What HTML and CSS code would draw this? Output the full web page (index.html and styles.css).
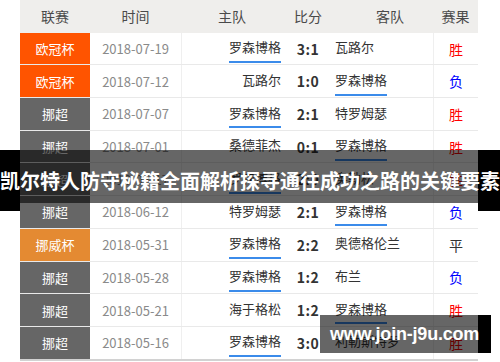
FILE: index.html
```html
<!DOCTYPE html>
<html lang="zh">
<head>
<meta charset="utf-8">
<link rel="stylesheet" href="styles.css">
</head>
<body>
<div class="page">
  <div class="table">
    <div class="row head">
      <div class="c">联赛</div><div class="c">时间</div><div class="c">主队</div><div class="c">比分</div><div class="c guest-h">客队</div><div class="c">赛果</div>
    </div>
    <div class="row">
      <div class="league ucl">欧冠杯</div><div class="date">2018-07-19</div>
      <div class="home"><span class="team u">罗森博格</span></div><div class="score">3:1</div>
      <div class="guest"><span class="team">瓦路尔</span></div><div class="res win">胜</div>
    </div>
    <div class="row">
      <div class="league ucl">欧冠杯</div><div class="date">2018-07-12</div>
      <div class="home"><span class="team">瓦路尔</span></div><div class="score">1:0</div>
      <div class="guest"><span class="team u">罗森博格</span></div><div class="res lose">负</div>
    </div>
    <div class="row">
      <div class="league nor">挪超</div><div class="date">2018-07-07</div>
      <div class="home"><span class="team u">罗森博格</span></div><div class="score">2:1</div>
      <div class="guest"><span class="team">特罗姆瑟</span></div><div class="res win">胜</div>
    </div>
    <div class="row">
      <div class="league nor">挪超</div><div class="date">2018-07-01</div>
      <div class="home"><span class="team">桑德菲杰</span></div><div class="score">0:1</div>
      <div class="guest"><span class="team u">罗森博格</span></div><div class="res win">胜</div>
    </div>
    <div class="row">
      <div class="league nor">挪超</div><div class="date">2018-06-17</div>
      <div class="home"><span class="team u">罗森博格</span></div><div class="score">2:0</div>
      <div class="guest"><span class="team">奥勒松</span></div><div class="res win">胜</div>
    </div>
    <div class="row">
      <div class="league nor">挪超</div><div class="date">2018-06-12</div>
      <div class="home"><span class="team">特罗姆瑟</span></div><div class="score">2:1</div>
      <div class="guest"><span class="team u">罗森博格</span></div><div class="res lose">负</div>
    </div>
    <div class="row">
      <div class="league nwc">挪威杯</div><div class="date">2018-05-31</div>
      <div class="home"><span class="team u">罗森博格</span></div><div class="score">2:2</div>
      <div class="guest"><span class="team">奥德格伦兰</span></div><div class="res draw">平</div>
    </div>
    <div class="row">
      <div class="league nor">挪超</div><div class="date">2018-05-28</div>
      <div class="home"><span class="team u">罗森博格</span></div><div class="score">1:2</div>
      <div class="guest"><span class="team">布兰</span></div><div class="res lose">负</div>
    </div>
    <div class="row">
      <div class="league nor">挪超</div><div class="date">2018-05-21</div>
      <div class="home"><span class="team">海于格松</span></div><div class="score">1:2</div>
      <div class="guest"><span class="team u">罗森博格</span></div><div class="res win">胜</div>
    </div>
    <div class="row last">
      <div class="league nor">挪超</div><div class="date">2018-05-16</div>
      <div class="home"><span class="team u">罗森博格</span></div><div class="score">3:0</div>
      <div class="guest"><span class="team">利勒斯特罗</span></div><div class="res win">胜</div>
    </div>
  </div>

  <div class="band">
    <div class="band-edge band-left"></div>
    <div class="band-mid"></div>
    <div class="band-edge band-right"></div>
    <div class="band-title">凯尔特人防守秘籍全面解析探寻通往成功之路的关键要素</div>
  </div>

  <div class="mark">
    <div class="mark-mid"></div>
    <div class="mark-edge"></div>
    <div class="mark-text">www.join-j9u.com</div>
  </div>
</div>
</body>
</html>
```

FILE: styles.css
```css
html, body {
  margin: 0;
  padding: 0;
  background: #fff;
  overflow: hidden;
}

.page {
  position: relative;
  width: 500px;
  height: 362px;
  overflow: hidden;
  font-family: "Noto Sans CJK SC", "Noto Sans", sans-serif;
}

.table {
  margin-left: 20px;
  width: 458px;
}

.row {
  display: grid;
  grid-template-columns: 70px 91px 102px 50px 100px 45px;
  height: 32.7px;
  box-sizing: border-box;
  border-bottom: 1px solid #e9e9e9;
  font-size: 13px;
  color: #333;
}

.row.last {
  border-bottom: 2px solid #d2d2d2;
  height: 33.7px;
}

.head {
  background: #efeeec;
  border-bottom: none;
  font-size: 14px;
  color: #4a4a4a;
}

.c {
  display: flex;
  align-items: center;
  justify-content: center;
  padding-bottom: 1px;
}

.guest-h {
  padding-left: 14px;
}

.league {
  display: flex;
  align-items: center;
  justify-content: center;
  color: #fff;
}

.ucl { background: #ff5400; }
.nor { background: #666666; }
.nwc { background: #e48a32; }

.date {
  display: flex;
  align-items: center;
  justify-content: center;
  color: #8a8a8a;
  font-size: 13px;
}

.home {
  display: flex;
  justify-content: flex-end;
  padding-right: 2px;
  border-left: 1px solid #efefef;
}

.guest {
  display: flex;
  justify-content: flex-start;
  padding-left: 2px;
}

.team {
  display: flex;
  align-items: center;
  border-bottom: 2px solid transparent;
  margin-bottom: 1.5px;
}

.team.u {
  border-bottom-color: #3b8bea;
}

.score {
  display: flex;
  align-items: center;
  justify-content: center;
  font-weight: bold;
  font-size: 14px;
  letter-spacing: 0.5px;
  color: #333;
}

.res {
  display: flex;
  align-items: center;
  justify-content: center;
  border-left: 1px solid #efefef;
  font-size: 14px;
}

.win { color: #ff0000; }
.lose { color: #0000ff; }
.draw { color: #333; }

.band {
  position: absolute;
  left: 0;
  top: 150px;
  width: 500px;
  height: 61px;
  display: grid;
  grid-template-columns: 20px 1fr 22px;
  grid-template-rows: 53px 8px;
}

.band-edge {
  background: #000;
  grid-row: 1 / 3;
}

.band-left { grid-column: 1; }
.band-right { grid-column: 3; }

.band-mid {
  grid-column: 2;
  grid-row: 1;
  background: rgba(0, 0, 0, 0.6);
}

.band-title {
  grid-column: 1 / 4;
  grid-row: 1 / 3;
  align-self: center;
  justify-self: center;
  white-space: nowrap;
  color: #fff;
  font-weight: bold;
  font-size: 20px;
  line-height: 24px;
  margin-top: 1px;
}

.mark {
  position: absolute;
  left: 320px;
  top: 315px;
  width: 171px;
  height: 38px;
  display: grid;
  grid-template-columns: 158px 13px;
}

.mark-mid {
  grid-column: 1;
  grid-row: 1;
  background: rgba(0, 0, 0, 0.6);
}

.mark-edge {
  grid-column: 2;
  grid-row: 1;
  background: #000;
}

.mark-text {
  grid-column: 1 / 3;
  grid-row: 1;
  align-self: center;
  padding-left: 10px;
  color: #fff;
  font-family: "Liberation Sans", Arial, sans-serif;
  font-weight: bold;
  font-size: 18px;
  letter-spacing: -0.2px;
  white-space: nowrap;
}
```
